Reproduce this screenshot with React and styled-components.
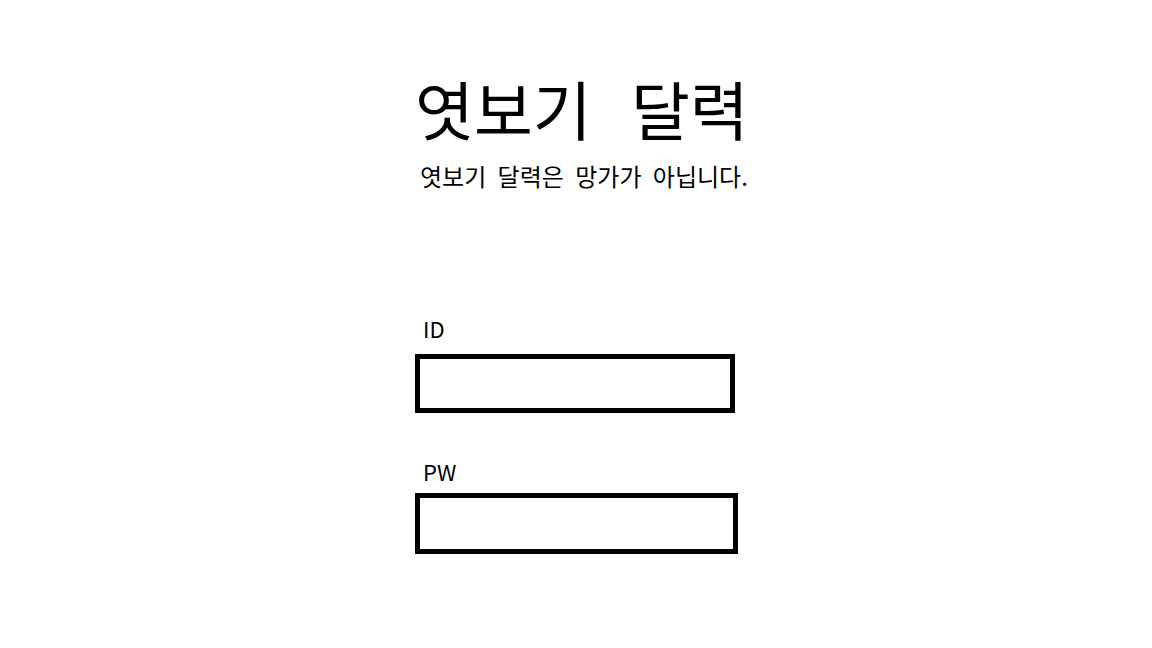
import styled, { createGlobalStyle } from "styled-components";

const GlobalStyle = createGlobalStyle`
    body {
        margin: 0;
        background: #fff;
        font-family: "Noto Sans CJK KR", "Noto Sans", sans-serif;
        color: #000;
    }
`;

const App = () => {
    return (
        <>
            <GlobalStyle />
            <Page>
                <Header>
                    <Title>엿보기 달력</Title>
                    <SubTitle>엿보기 달력은 망가가 아닙니다.</SubTitle>
                </Header>
                <Form>
                    <Field>
                        <Label space={12}>ID</Label>
                        <Input type="text" />
                    </Field>
                    <Field>
                        <Label space={8}>PW</Label>
                        <Input type="password" wide />
                    </Field>
                </Form>
            </Page>
        </>
    )
}

const Page = styled.div`
    width: 322px;
    margin: 0 auto;
    padding-top: 67px;
`;

const Header = styled.div`
    display: flex;
    flex-direction: column;
`;

const Title = styled.h1`
    margin: 0;
    font-size: 64px;
    font-weight: 400;
    line-height: 80px;
    word-spacing: 25px;
    white-space: nowrap;
`;

const SubTitle = styled.p`
    margin: 14px 0 0 5px;
    font-size: 24px;
    line-height: 30px;
    word-spacing: 6px;
    white-space: nowrap;
`;

const Form = styled.div`
    display: flex;
    flex-direction: column;
    gap: 44px;
    margin-top: 123px;
`;

const Field = styled.div`
    display: flex;
    flex-direction: column;
`;

const Label = styled.label`
    font-size: 22px;
    line-height: 28px;
    padding-left: 8px;
    margin-bottom: ${p => p.space}px;
`;

const Input = styled.input`
    box-sizing: border-box;
    width: ${p => p.wide ? "323px" : "320px"};
    height: ${p => p.wide ? "61px" : "59px"};
    border: 5px solid #000;
    outline: none;
    background: #fff;
`;

export default App;
